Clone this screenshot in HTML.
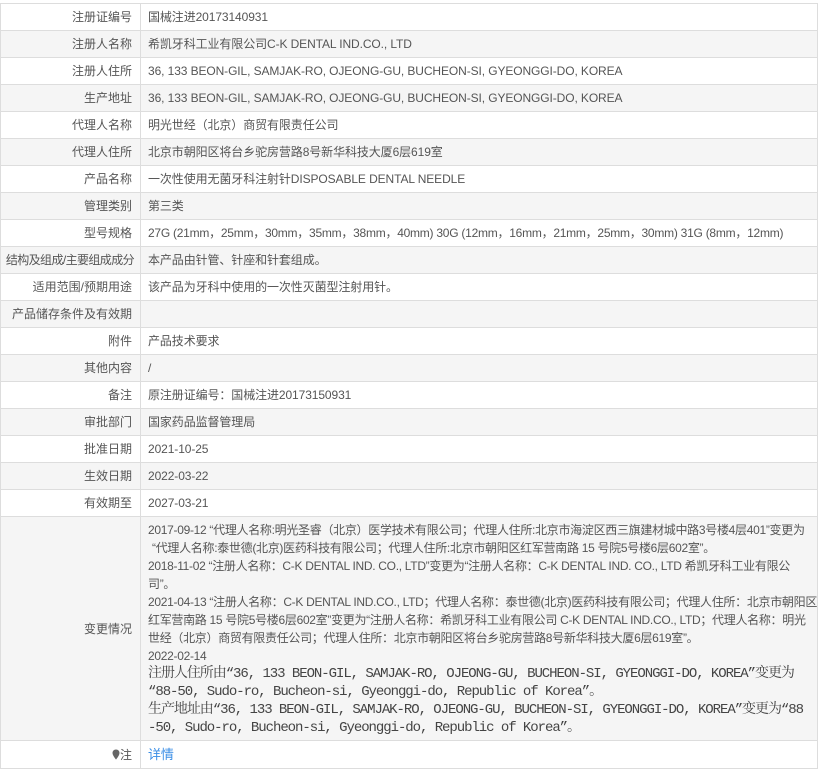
<!DOCTYPE html>
<html><head><meta charset="utf-8"><style>
body{margin:0;background:#fff;font-family:"Liberation Sans","Noto Sans CJK SC",sans-serif;font-size:12px;color:#555;}
table{position:absolute;left:0;top:3px;width:818px;border-collapse:collapse;table-layout:fixed;}
td{border:1px solid #ddd;height:26px;padding:0;line-height:16px;white-space:nowrap;overflow:hidden}
td.l{width:131px;text-align:right;padding-right:8px;}
td.v{padding-left:7px;letter-spacing:-0.1px}
tr:nth-child(even) td{background:#f5f5f5;}
.ch{line-height:18px;padding:4px 0 3px 7px;letter-spacing:-0.3px}
.ch .i{padding-left:4px}
.m{font-family:"Liberation Mono","Noto Serif CJK SC",monospace;font-size:14px;line-height:18px;color:#444;letter-spacing:-1.05px}
a{color:#3a8ee6;text-decoration:none;font-size:13px}
</style></head><body>
<table>
<tr><td class="l">注册证编号</td><td class="v">国械注进20173140931</td></tr>
<tr><td class="l">注册人名称</td><td class="v">希凯牙科工业有限公司C-K DENTAL IND.CO., LTD</td></tr>
<tr><td class="l">注册人住所</td><td class="v">36, 133 BEON-GIL, SAMJAK-RO, OJEONG-GU, BUCHEON-SI, GYEONGGI-DO, KOREA</td></tr>
<tr><td class="l">生产地址</td><td class="v">36, 133 BEON-GIL, SAMJAK-RO, OJEONG-GU, BUCHEON-SI, GYEONGGI-DO, KOREA</td></tr>
<tr><td class="l">代理人名称</td><td class="v">明光世经（北京）商贸有限责任公司</td></tr>
<tr><td class="l">代理人住所</td><td class="v">北京市朝阳区将台乡驼房营路8号新华科技大厦6层619室</td></tr>
<tr><td class="l">产品名称</td><td class="v">一次性使用无菌牙科注射针DISPOSABLE DENTAL NEEDLE</td></tr>
<tr><td class="l">管理类别</td><td class="v">第三类</td></tr>
<tr><td class="l">型号规格</td><td class="v" style="letter-spacing:-0.25px">27G (21mm，25mm，30mm，35mm，38mm，40mm) 30G (12mm，16mm，21mm，25mm，30mm) 31G (8mm，12mm)</td></tr>
<tr><td class="l" style="letter-spacing:-0.6px;padding-right:6px">结构及组成/主要组成成分</td><td class="v">本产品由针管、针座和针套组成。</td></tr>
<tr><td class="l">适用范围/预期用途</td><td class="v">该产品为牙科中使用的一次性灭菌型注射用针。</td></tr>
<tr><td class="l">产品储存条件及有效期</td><td class="v"></td></tr>
<tr><td class="l">附件</td><td class="v">产品技术要求</td></tr>
<tr><td class="l">其他内容</td><td class="v">/</td></tr>
<tr><td class="l">备注</td><td class="v">原注册证编号：国械注进20173150931</td></tr>
<tr><td class="l">审批部门</td><td class="v">国家药品监督管理局</td></tr>
<tr><td class="l">批准日期</td><td class="v">2021-10-25</td></tr>
<tr><td class="l">生效日期</td><td class="v">2022-03-22</td></tr>
<tr><td class="l">有效期至</td><td class="v">2027-03-21</td></tr>
<tr><td class="l" style="height:220px">变更情况</td><td class="ch">2017-09-12 “代理人名称:明光圣睿（北京）医学技术有限公司；代理人住所:北京市海淀区西三旗建材城中路3号楼4层401”变更为<br><span class="i">“代理人名称:泰世德(北京)医药科技有限公司；代理人住所:北京市朝阳区红军营南路 15 号院5号楼6层602室”。</span><br>2018-11-02 “注册人名称：C-K DENTAL IND. CO., LTD”变更为“注册人名称：C-K DENTAL IND. CO., LTD 希凯牙科工业有限公<br>司”。<br>2021-04-13 “注册人名称：C-K DENTAL IND.CO., LTD；代理人名称：泰世德(北京)医药科技有限公司；代理人住所：北京市朝阳区<br>红军营南路 15 号院5号楼6层602室”变更为“注册人名称：希凯牙科工业有限公司 C-K DENTAL IND.CO., LTD；代理人名称：明光<br>世经（北京）商贸有限责任公司；代理人住所：北京市朝阳区将台乡驼房营路8号新华科技大厦6层619室”。<br>2022-02-14<br><div class="m">注册人住所由“36, 133 BEON-GIL, SAMJAK-RO, OJEONG-GU, BUCHEON-SI, GYEONGGI-DO, KOREA”变更为<br>“88-50, Sudo-ro, Bucheon-si, Gyeonggi-do, Republic of Korea”。<br>生产地址由“36, 133 BEON-GIL, SAMJAK-RO, OJEONG-GU, BUCHEON-SI, GYEONGGI-DO, KOREA”变更为“88<br>-50, Sudo-ro, Bucheon-si, Gyeonggi-do, Republic of Korea”。</div></td></tr>
<tr><td class="l" style="height:27px"><svg width="8" height="11" viewBox="0 0 8 11" style="vertical-align:-1px"><path d="M4 0.5C1.9 0.5 0.5 2 0.5 4c0 2.5 3.5 6.5 3.5 6.5S7.5 6.5 7.5 4C7.5 2 6.1 0.5 4 0.5z" fill="#666"/></svg>注</td><td class="v"><a>详情</a></td></tr>
</table>
</body></html>
